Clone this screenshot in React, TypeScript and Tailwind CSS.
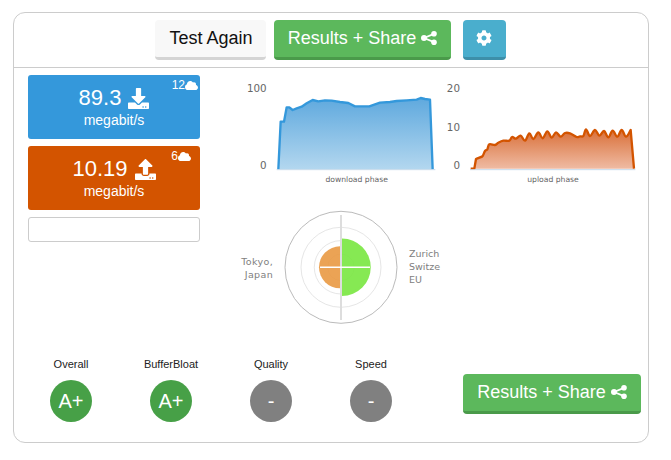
import { FaDownload, FaUpload, FaCloud, FaCog } from "react-icons/fa";

const down = "115,283 122,140 132,140 140,97 148,97 158,105 170,100 185,95 200,85 218,75 235,79 255,76 275,77 300,81 325,84 345,94 388,94 405,88 420,83 450,81 470,78 500,76 530,74 542,69 555,72 570,74 578,283";
const upPts: [number, number][] = [[108,252],[120,247],[128,243],[135,228],[142,223],[148,208],[165,210],[175,203],[190,197],[208,197],[216,186],[228,191],[242,182],[255,197],[268,175],[280,192],[295,172],[308,190],[322,169],[335,188],[348,172],[362,185],[375,174],[390,175],[410,186],[420,184],[430,183],[438,163],[450,183],[465,165],[478,182],[492,168],[505,187],[518,167],[532,185],[545,165],[558,185],[572,165]];

function smooth(p: [number, number][]) {
  let d = "";
  for (let i = 0; i < p.length - 1; i++) {
    const a = p[Math.max(i - 1, 0)], b = p[i], c = p[i + 1], e = p[Math.min(i + 2, p.length - 1)];
    const k = 0.18;
    d += ` C${b[0] + (c[0] - a[0]) * k} ${b[1] + (c[1] - a[1]) * k} ${c[0] - (e[0] - b[0]) * k} ${c[1] - (e[1] - b[1]) * k} ${c[0]} ${c[1]}`;
  }
  return d;
}
const up = "M92 281 L103 281 L108 252" + smooth(upPts) + " L582 281";

function ShareIcon() {
  return (
    <svg width="16" height="14" viewBox="0 0 16 14" fill="currentColor" stroke="currentColor">
      <path d="M3 7 L13 2.8 M3 7 L13 11.2" strokeWidth="1.8" />
      <circle cx="3" cy="7" r="3" stroke="none" />
      <circle cx="13" cy="2.8" r="2.8" stroke="none" />
      <circle cx="13" cy="11.2" r="2.8" stroke="none" />
    </svg>
  );
}

function Btn({ children, className }: { children: React.ReactNode; className: string }) {
  return (
    <div className={"flex h-10 items-center justify-center rounded border-b-[3px] pb-[2px] text-[18px] leading-none " + className}>
      {children}
    </div>
  );
}

function ResultsBtn({ className }: { className: string }) {
  return (
    <Btn className={"gap-[5px] bg-[#5cb85c] border-[#4a9a4a] text-white " + className}>
      Results + Share <ShareIcon />
    </Btn>
  );
}

function Tile({ value, icon, badge, bg, badgeRight }: { value: string; icon: React.ReactNode; badge: string; bg: string; badgeRight: string }) {
  return (
    <div className={"relative flex h-16 w-[172px] flex-col items-center rounded-[3px] pt-[10px] text-white " + bg}>
      <div className="flex h-[26px] items-center gap-[7px] text-[22px] leading-none">
        <span>{value}</span>
        {icon}
      </div>
      <div className="text-[14px] leading-[18px]">megabit/s</div>
      <div className={"absolute top-[3px] flex items-center text-[12px] leading-[14px] " + badgeRight}>
        {badge}
        <FaCloud className="h-[13px] w-[13px]" />
      </div>
    </div>
  );
}

function Grade({ label, value, good }: { label: string; value: string; good?: boolean }) {
  return (
    <div className="flex w-[100px] flex-col items-center">
      <div className="text-[11px] leading-[13px] text-[#222]">{label}</div>
      <div className={"mt-[9px] flex h-[42px] w-[42px] items-center justify-center rounded-full text-[20px] text-white " + (good ? "bg-[#47a047]" : "bg-[#808080]")}>
        {value}
      </div>
    </div>
  );
}

function Axis({ x, y, t }: { x: number; y: number; t: string }) {
  return (
    <text x={x} y={y} textAnchor="end" fontSize="31" fill="#666" fontFamily="'DejaVu Sans', sans-serif">
      {t}
    </text>
  );
}

export default function App() {
  return (
    <div className="h-[460px] w-[671px] bg-white pl-[13px] pt-[12px] font-['Liberation_Sans',Arial,sans-serif]">
      <div className="h-[431px] w-[636px] rounded-xl border border-[#ccc]">
        <div className="flex h-[55px] items-end justify-center border-b border-[#ccc] pb-[7px] pr-[2px]">
          <Btn className="w-[111px] bg-[#f8f8f8] border-[#d4d4d4] pl-[2px] text-[#111]">Test Again</Btn>
          <ResultsBtn className="ml-2 w-[177px] pl-[1px]" />
          <Btn className="ml-3 w-[43px] bg-[#4aaecd] border-[#3d8fa9] text-white">
            <FaCog className="h-[16px] w-[16px]" />
          </Btn>
        </div>

        <div className="flex h-[288px] pl-[14px] pt-[7px]">
          <div className="flex w-[172px] flex-col gap-[7px]">
            <Tile value="89.3" badge="12" bg="bg-[#3498db]" badgeRight="right-[2px]" icon={<FaDownload className="h-[21px] w-[21px]" />} />
            <Tile value="10.19" badge="6" bg="bg-[#d35400]" badgeRight="right-[9px]" icon={<FaUpload className="h-[21px] w-[21px]" />} />
            <div className="h-[25px] rounded-[3px] border border-[#ccc]" />
          </div>
          <div className="ml-[35px] flex flex-col">
            <div className="flex pl-[5px]">
              <svg width="200" height="115" viewBox="0 0 600 345">
                <defs>
                  <linearGradient id="gd" x1="0" y1="0" x2="0" y2="1">
                    <stop offset="0" stopColor="#5fa9de" />
                    <stop offset="1" stopColor="#b3d7ef" />
                  </linearGradient>
                  <linearGradient id="gu" x1="0" y1="0" x2="0" y2="1">
                    <stop offset="0" stopColor="#d96f38" />
                    <stop offset="1" stopColor="#efbba3" />
                  </linearGradient>
                </defs>
                <Axis x={80} y={50} t="100" />
                <Axis x={80} y={281} t="0" />
                <polygon points={down} fill="url(#gd)" />
                <polyline points={down} fill="none" stroke="#3498db" strokeWidth="7" strokeLinejoin="round" />
                <line x1="110" y1="284" x2="586" y2="284" stroke="#c5d9ea" strokeWidth="3" />
                <text x="350" y="321" textAnchor="middle" fontSize="23" fill="#666" fontFamily="'DejaVu Sans', sans-serif">download phase</text>
              </svg>
              <svg width="200" height="115" viewBox="0 0 600 345">
                <Axis x={60} y={50} t="20" />
                <Axis x={60} y={167} t="10" />
                <Axis x={60} y={281} t="0" />
                <path d={up} fill="url(#gu)" />
                <path d={up} fill="none" stroke="#d35400" strokeWidth="7" strokeLinejoin="round" />
                <line x1="90" y1="284" x2="586" y2="284" stroke="#c5d9ea" strokeWidth="3" />
                <text x="339" y="321" textAnchor="middle" fontSize="23" fill="#666" fontFamily="'DejaVu Sans', sans-serif">upload phase</text>
              </svg>
            </div>
            <svg className="mt-[15px]" width="215" height="125" viewBox="0 0 215 125">
              <g fill="none">
                <circle cx="106" cy="62.3" r="56" stroke="#bbb" />
                <circle cx="106" cy="62.3" r="40" stroke="#e6e6e6" />
                <circle cx="106" cy="62.3" r="26.7" stroke="#e6e6e6" />
                <circle cx="106" cy="62.3" r="13.3" stroke="#ccc" />
              </g>
              <line x1="106" y1="10" x2="106" y2="115" stroke="#ddd" strokeWidth="2" />
              <path d="M107 33.5 A28.7 28.7 0 0 1 107 91 Z" fill="#80e84a" fillOpacity="0.95" />
              <path d="M105 41.3 A21 21 0 0 0 105 83.3 Z" fill="#ea9e4c" fillOpacity="0.95" />
              <line x1="85" y1="62.3" x2="135" y2="62.3" stroke="#fff" strokeWidth="1.5" />
              <g fontSize="9.5" fill="#808080" fontFamily="'DejaVu Sans', sans-serif">
                <text x="38" y="59.5" textAnchor="end" letterSpacing="0.35">Tokyo,</text>
                <text x="38" y="72.5" textAnchor="end" letterSpacing="0.35">Japan</text>
                <text x="174" y="52">Zurich</text>
                <text x="174" y="65">Switze</text>
                <text x="174" y="78">EU</text>
              </g>
            </svg>
          </div>
        </div>

        <div className="flex items-start pl-[7px] pt-[2px]">
          <Grade label="Overall" value="A+" good />
          <Grade label="BufferBloat" value="A+" good />
          <Grade label="Quality" value="-" />
          <Grade label="Speed" value="-" />
          <ResultsBtn className="ml-[42px] mt-[16px] w-[178px]" />
        </div>
      </div>
    </div>
  );
}
